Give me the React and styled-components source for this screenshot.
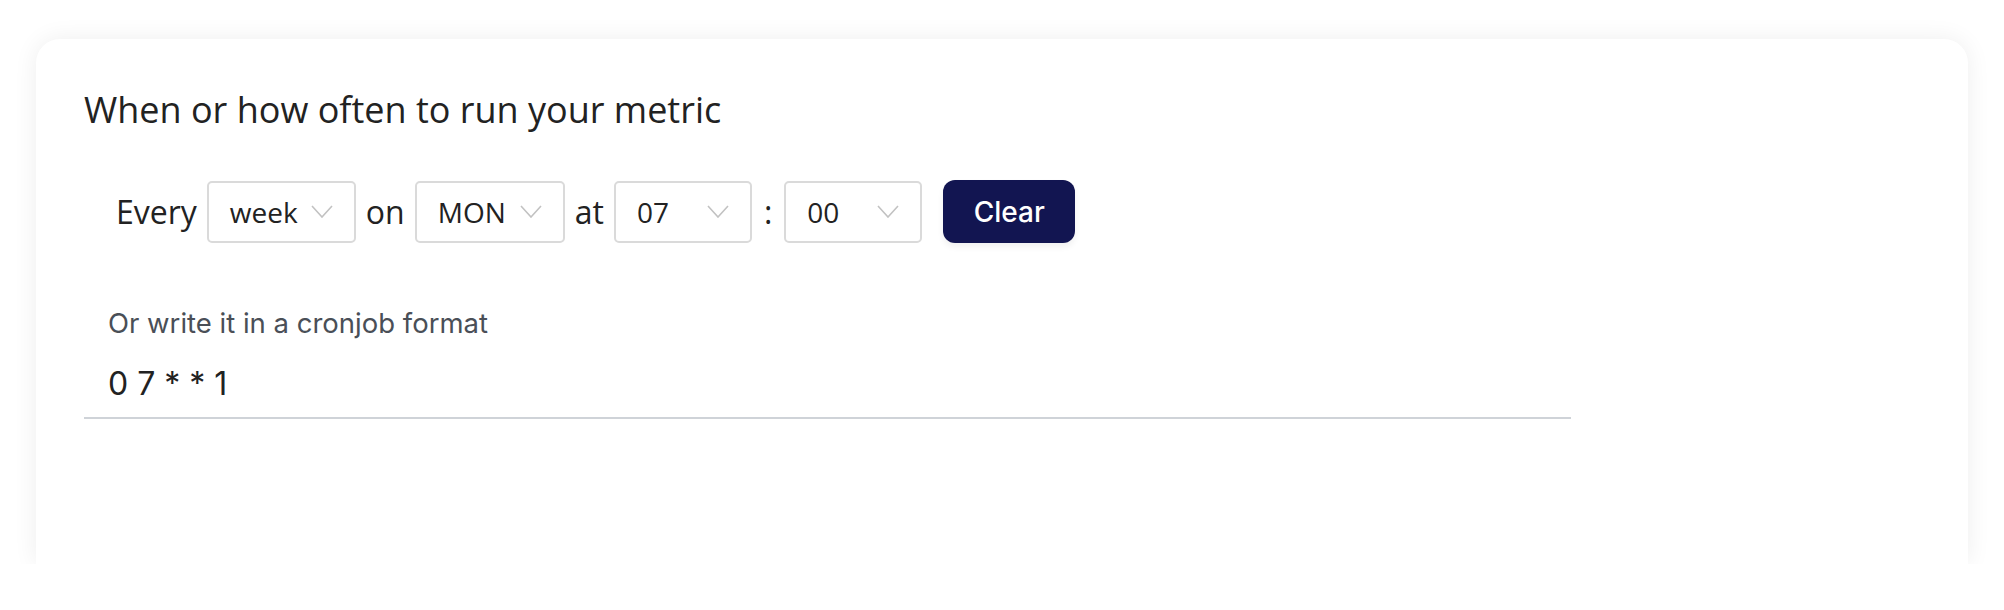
import React from 'react';
import styled, { createGlobalStyle } from 'styled-components';

const GlobalStyle = createGlobalStyle`
    html, body {
        margin:0;
        padding:0;
        background-color:#ffffff;
    }
    body {
        font-family:"Open Sans", "Noto Sans", sans-serif;
        color:#222222;
    }
`;

const Card = styled.div`
    box-sizing:border-box;
    margin:39px 36px 0 36px;
    height:525px;
    padding:47px 48px 0 48px;
    background-color:#ffffff;
    border-radius:24px 24px 0 0;
    box-shadow:0 0 24px rgba(0,0,0,.07);
`;

const Title = styled.h2`
    margin:0;
    font-family:"Open Sans", sans-serif;
    font-size:36px;
    font-weight:400;
    line-height:48px;
    color:#222222;
`;

const ScheduleRow = styled.div`
    display:flex;
    align-items:center;
    gap:10px;
    margin-top:46px;
    padding-left:32px;
`;

const Word = styled.span`
    font-family:"Open Sans", sans-serif;
    font-size:32px;
    line-height:62px;
    color:#222222;
    margin:0 ${props => props.$space || 0}px;
`;

const SelectBox = styled.div`
    box-sizing:border-box;
    display:flex;
    align-items:center;
    justify-content:space-between;
    width:${props => props.$width}px;
    height:62px;
    padding:0 21px 0 21px;
    border:2px solid #dadada;
    border-radius:5px;
    background-color:#ffffff;
    font-family:"Open Sans", sans-serif;
    font-size:28px;
    color:#222222;
`;

const Chevron = styled.svg`
    width:22px;
    height:13px;
    flex-shrink:0;
`;

const ClearButton = styled.button`
    box-sizing:border-box;
    width:132px;
    height:63px;
    margin-left:11px;
    border:none;
    border-radius:12px;
    background-color:#121551;
    color:#ffffff;
    font-family:Inter, "Liberation Sans", sans-serif;
    font-size:28px;
    font-weight:500;
    box-shadow:0 4px 6px rgba(0,0,0,.06);
    cursor:pointer;
`;

const CronField = styled.div`
    width:1487px;
    margin-top:62px;
`;

const CronLabel = styled.div`
    padding-left:24px;
    font-family:Inter, "Liberation Sans", sans-serif;
    font-size:27.5px;
    line-height:36px;
    color:#4a4f57;
`;

const CronInput = styled.input`
    box-sizing:border-box;
    display:block;
    width:100%;
    margin-top:22px;
    padding:0 0 13px 24px;
    border:none;
    border-bottom:2px solid #cfd3d8;
    outline:none;
    background:transparent;
    font-family:Inter, "Liberation Sans", sans-serif;
    font-size:32px;
    line-height:40px;
    height:56px;
    color:#222222;
`;

function Select({ value, width }) {
    return (
        <SelectBox $width={width}>
            <span>{value}</span>
            <Chevron viewBox="0 0 22 13">
                <path d="M1 1 L11 12 L21 1" fill="none" stroke="#c2c2c2" strokeWidth="1.6" />
            </Chevron>
        </SelectBox>
    );
}

export default function App() {
    return (
        <>
            <GlobalStyle />
            <Card>
                <Title>When or how often to run your metric</Title>
                <ScheduleRow>
                    <Word>Every</Word>
                    <Select value="week" width={149} />
                    <Word>on</Word>
                    <Select value="MON" width={150} />
                    <Word>at</Word>
                    <Select value="07" width={138} />
                    <Word $space={2}>:</Word>
                    <Select value="00" width={138} />
                    <ClearButton type="button">Clear</ClearButton>
                </ScheduleRow>
                <CronField>
                    <CronLabel>Or write it in a cronjob format</CronLabel>
                    <CronInput type="text" defaultValue="0 7 * * 1" />
                </CronField>
            </Card>
        </>
    );
}
